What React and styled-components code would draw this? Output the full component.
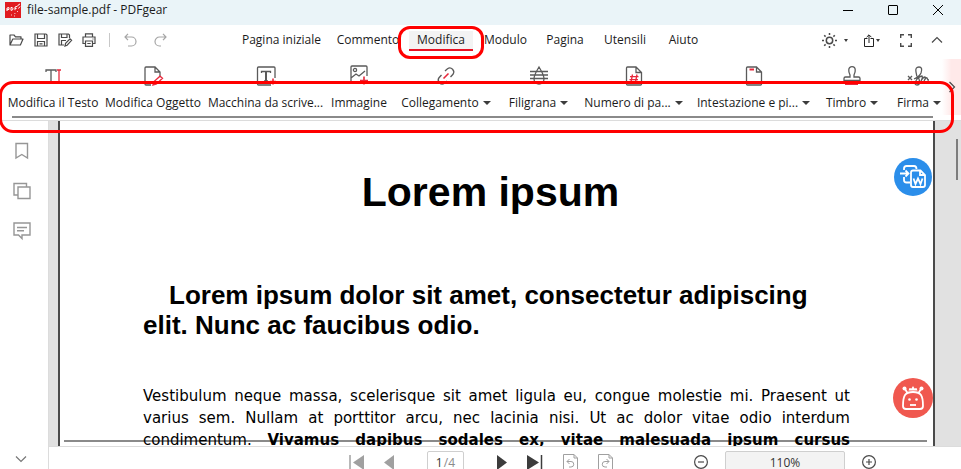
import styled, { createGlobalStyle } from "styled-components";

const GlobalStyle = createGlobalStyle`
  * {
    box-sizing: border-box;
  }
  body {
    margin: 0;
    overflow: hidden;
    font-family: "Open Sans", "Noto Sans", sans-serif;
    font-size: 12px;
    color: #1b1b1b;
  }
  button,
  input {
    font: inherit;
    color: inherit;
  }
  svg {
    display: block;
    overflow: visible;
    fill: none;
    stroke: currentColor;
  }
`;

const Window = styled.div`
  display: flex;
  flex-direction: column;
  height: 100vh;
  background: #fff;
`;

const TitleBar = styled.header`
  display: flex;
  align-items: center;
  justify-content: space-between;
  flex: 0 0 25px;
  padding: 0 18px 6px 5px;
  background: #eaf4f8;
`;

const AppTitle = styled.div`
  display: flex;
  align-items: center;
  gap: 6px;
  line-height: 16px;
`;

const Group = styled.div`
  display: flex;
  align-items: center;
  gap: ${(props) => props.$gap}px;
`;

const IconButton = styled.button`
  display: flex;
  align-items: center;
  justify-content: center;
  padding: 0;
  border: 0;
  background: none;
  color: ${(props) => props.$color || "#4a4a4a"};
  cursor: pointer;
`;

const MenuBar = styled.nav`
  display: flex;
  flex: 0 0 34px;
  padding: 0 19px 4px 9px;
`;

const QuickActions = styled(Group)`
  width: 225px;
`;

const Divider = styled.span`
  width: 1px;
  height: 14px;
  margin-left: 3px;
  background: #c8c8c8;
`;

const Tabs = styled.div`
  display: flex;
  align-items: center;
  flex: 1;
  padding-top: 2px;
`;

const TabSlot = styled.div`
  position: relative;
  display: flex;
  justify-content: center;
  width: ${(props) => props.$width}px;
`;

const Tab = styled.button`
  padding: 0 8px;
  border: 0;
  border-bottom: 2px solid ${(props) => (props.$active ? "#e81123" : "transparent")};
  background: ${(props) => (props.$active ? "#f3f3f3" : "none")};
  line-height: 18px;
  white-space: nowrap;
  cursor: pointer;
`;

const TabMark = styled.span`
  position: absolute;
  inset: -5px -9px -8px;
  border: 3px solid #f00;
  border-radius: 12px;
  pointer-events: none;
`;

const Ribbon = styled.section`
  position: relative;
  flex: none;
  padding: 7px 10px 2px 5px;
  border-bottom: 1px solid #dcdcdc;
`;

const Tools = styled.div`
  display: grid;
  grid-template-columns:
    minmax(0, 96fr) minmax(0, 104fr) minmax(0, 121fr) minmax(0, 66fr)
    minmax(0, 108fr) minmax(0, 77fr) minmax(0, 113fr) minmax(0, 127fr)
    minmax(0, 70fr) minmax(0, 64fr);
`;

const Tool = styled.button`
  display: flex;
  flex-direction: column;
  align-items: center;
  gap: 9px;
  padding: 0;
  border: 0;
  background: none;
  color: #5a5a5a;
  cursor: pointer;
`;

const ToolLabel = styled.span`
  display: flex;
  align-items: center;
  gap: 4px;
  color: #1b1b1b;
  line-height: 16px;
  white-space: nowrap;
`;

const Caret = styled.span`
  border: solid transparent;
  border-width: ${(props) => (props.$small ? "3px 2px 0" : "4px 4px 0")};
  border-top-color: #3c3c3c;
`;

const RibbonScroll = styled.div`
  height: 2px;
  margin: 5px 18px 0 7px;
  background: #8a8a8a;
`;

const RibbonMark = styled.div`
  position: absolute;
  inset: 22px 7px -13px -1px;
  z-index: 2;
  border: 3px solid #f00;
  border-radius: 14px;
  pointer-events: none;
`;

const RibbonNext = styled(IconButton)`
  position: absolute;
  top: 0;
  right: 0;
  width: 19px;
  height: 56px;
  background: linear-gradient(to right, #fff, #ffe9e9 50%);
`;

const Body = styled.div`
  display: flex;
  flex: 1;
  min-height: 0;
`;

const Sidebar = styled.aside`
  display: flex;
  flex-direction: column;
  align-items: center;
  gap: 22px;
  width: 49px;
  padding: 21px 4px 7px 0;
  border-right: 1px solid #dcdcdc;
`;

const SidebarToggle = styled(IconButton)`
  margin: auto 3px 0 0;
`;

const Main = styled.main`
  display: flex;
  flex: 1;
  flex-direction: column;
  min-width: 0;
`;

const Viewer = styled.div`
  position: relative;
  display: flex;
  flex: 1;
  min-height: 0;
  overflow: hidden;
  padding: 0 26px 0 9px;
  background: #e1e1e1;
`;

const Page = styled.article`
  flex: 1;
  padding: 47px 83px 0;
  border: solid #4a4a4a;
  border-width: 0 2px;
  background: #fff;
  color: #000;
`;

const Heading = styled.h1`
  margin: 0;
  padding-right: 12px;
  font: bold 41px/48px "Liberation Sans", Arial, sans-serif;
  text-align: center;
`;

const Subheading = styled.h2`
  margin: 64px 0 45px;
  font: bold 26px/30px "Liberation Sans", Arial, sans-serif;
  text-indent: 26px;
`;

const Paragraph = styled.p`
  margin: 0;
  font: 15px/22px "DejaVu Sans", sans-serif;
  text-align: justify;
  text-align-last: justify;
`;

const HorizontalScroll = styled.div`
  position: absolute;
  right: 34px;
  bottom: 4px;
  left: 15px;
  height: 2px;
  background: rgba(0, 0, 0, 0.46);
`;

const VerticalScroll = styled.div`
  position: absolute;
  top: 18px;
  right: 3px;
  width: 2px;
  height: 41px;
  background: #7d7d7d;
`;

const FloatingButton = styled(IconButton)`
  position: absolute;
  right: ${(props) => (props.$bottom ? 28 : 29)}px;
  top: ${(props) => props.$top};
  bottom: ${(props) => props.$bottom};
  width: ${(props) => props.$size}px;
  height: ${(props) => props.$size}px;
  border-radius: 50%;
  background: ${(props) => props.$fill};
  color: #fff;
`;

const Footer = styled.footer`
  flex: 0 0 23px;
  overflow: hidden;
  border-top: 1px solid #dcdcdc;
`;

const FooterRow = styled.div`
  display: flex;
  align-items: center;
  justify-content: flex-end;
  gap: 81px;
  height: 30px;
  padding-right: 85px;
`;

const PageJump = styled.label`
  display: flex;
  align-items: center;
  justify-content: center;
  width: 37px;
  height: 22px;
  margin: 2px 13px;
  border: 1px solid #cfcfcf;
  border-radius: 2px;
  color: #8a8a8a;
`;

const PageInput = styled.input`
  width: 8px;
  padding: 0;
  border: 0;
  outline: 0;
  color: #333;
`;

const Zoom = styled.button`
  width: 120px;
  height: 22px;
  padding: 0;
  border: 1px solid #cfcfcf;
  border-radius: 2px;
  background: #f3f3f3;
  color: #333;
`;

const RED = "#e8283c";

const LogoIcon = () => (
  <svg width="16" height="16" viewBox="0 0 16 16">
    <path d="M0 0h16v16H0z" fill="#e01b20" stroke="none" />
    <path d="M2 9V6l2-.4v1.8l-2 .4M6 8.4V5.4q2 0 2 1.4T6 8.4M10 8.2V5l2-.6M10 6.4h1.6M12.5 4.4q.5-2 2.5-2.4M13.5 6.5l1.5-2" stroke="#fff" />
    <path d="M6 13h.8M9 14h.8M9.5 11.5h.8M12 9.5h.8" stroke="#fff" />
  </svg>
);

const MinimizeIcon = () => (
  <svg width="10" height="10" viewBox="0 0 10 10">
    <path d="M0 5.5h10" />
  </svg>
);

const MaximizeIcon = () => (
  <svg width="10" height="10" viewBox="0 0 10 10">
    <rect x=".5" y=".5" width="9" height="9" rx=".5" />
  </svg>
);

const CloseIcon = () => (
  <svg width="10" height="10" viewBox="0 0 10 10">
    <path d="M0 0l10 10M10 0L0 10" />
  </svg>
);

const OpenIcon = () => (
  <svg width="15" height="14" viewBox="0 0 15 14" strokeWidth="1.2">
    <path d="M1 12V2h4l1.5 1.8H12V6M1 12L3.8 6H14l-2.6 6z" strokeLinejoin="round" />
  </svg>
);

const SaveIcon = () => (
  <svg width="14" height="14" viewBox="0 0 14 14" strokeWidth="1.2">
    <path d="M1 1h11l1 1v11H1zM3.5 1v4.5h7V1M3.5 13V8.5h7V13M5.5 10.8h3" />
  </svg>
);

const SaveAsIcon = () => (
  <svg width="14" height="14" viewBox="0 0 14 14" strokeWidth="1.2">
    <path d="M6 12H1V1h9.5l1 1v3M3.5 1v3.5H9V1M3.5 12V7.5H8" />
    <path d="M7 13l.6-2.6 4.4-4.6 1.6 1.5-4.5 4.9z" />
  </svg>
);

const PrintIcon = () => (
  <svg width="14" height="14" viewBox="0 0 14 14" strokeWidth="1.2">
    <path d="M3.5 4V.8h7V4M3.5 10.5H1V4h12v6.5h-2.5M3.5 8h7v5.3h-7zM5.3 10.5h3.4M10.5 6h1" />
  </svg>
);

const UndoIcon = () => (
  <svg width="13" height="14" viewBox="0 0 13 14" strokeWidth="1.2">
    <path d="M4 .8L1 4l3 3.2M1 4h6.5a4.4 4.4 0 010 9H4" />
  </svg>
);

const RedoIcon = () => (
  <svg width="13" height="14" viewBox="0 0 13 14" strokeWidth="1.2">
    <path d="M9 .8L12 4 9 7.2M12 4H5.5a4.4 4.4 0 000 9H7" />
  </svg>
);

const SunIcon = () => (
  <svg width="15" height="15" viewBox="0 0 15 15" strokeWidth="1.5">
    <circle cx="7.5" cy="7.5" r="3.2" />
    <path d="M7.5 0v2M7.5 13v2M0 7.5h2M13 7.5h2M2.2 2.2l1.4 1.4M11.4 11.4l1.4 1.4M2.2 12.8l1.4-1.4M11.4 3.6l1.4-1.4" />
  </svg>
);

const ShareIcon = () => (
  <svg width="11" height="13" viewBox="0 0 11 13">
    <path d="M3.5 4.5h-3v8h9v-8h-3M5 9V1M2.6 3.2L5 .8l2.4 2.4" />
  </svg>
);

const FullscreenIcon = () => (
  <svg width="12" height="13" viewBox="0 0 12 13" strokeWidth="1.4">
    <path d="M.7 4V.7H4M8 .7h3.3V4M11.3 9v3.3H8M4 12.3H.7V9" />
  </svg>
);

const ChevronIcon = ({ rotate = 0 }) => (
  <svg width="10" height="6" viewBox="0 0 10 6" strokeWidth="1.2">
    <path d="M0 5.5l5-5 5 5" transform={`rotate(${rotate} 5 3)`} />
  </svg>
);

const ToolIcon = ({ children }) => (
  <svg width="20" height="20" viewBox="0 0 20 20" strokeWidth="1.3">
    {children}
  </svg>
);

const textIcon = (
  <ToolIcon>
    <path d="M3 6V4h10v2M8 4v13" />
    <path d="M14 4h4M16 4v13M14 17h4" stroke={RED} />
  </ToolIcon>
);

const objectIcon = (
  <ToolIcon>
    <path d="M8 19H3Q2 19 2 18V2q0-1 1-1h9l5 5v4M12 1v5h5" />
    <path d="M10 19l1-3.5 6-5.3 2.5 2-6 5.8zM12 15l2.5 2" stroke={RED} />
  </ToolIcon>
);

const typewriterIcon = (
  <ToolIcon>
    <path d="M15 19H2.5q-1 0-1-1V2q0-1 1-1H18q1 0 1 1v10M5.5 7V5.5h9V7M8 15h4" />
    <path d="M10 5.5V15" strokeWidth="2" />
    <path d="M14 15.5h6M17 12.5v6" stroke={RED} strokeWidth="1.6" />
  </ToolIcon>
);

const imageIcon = (
  <ToolIcon>
    <path d="M10 17H3q-1 0-1-1V1q0-1 1-1h14q1 0 1 1v9M2 12l5-4 3 2 6-5" />
    <circle cx="6" cy="4" r="1.6" />
    <path d="M11 14.5h8M15 10.5v8" stroke={RED} strokeWidth="1.6" />
  </ToolIcon>
);

const linkIcon = (
  <ToolIcon>
    <path d="M9 5l2.5-2.3a4 4 0 015.500 5.600L14.500 11M11 15l-2.500 2.300a4 4 0 01-5.500-5.600L5.500 9" />
    <path d="M7.5 12.5l5-5" stroke={RED} strokeWidth="1.6" />
  </ToolIcon>
);

const watermarkIcon = (
  <ToolIcon>
    <path d="M10 1Q5 9 5 13a5 5 0 0010 0Q15 9 10 1zM1 5.5h18M1 9h18M1 12.5h18" />
  </ToolIcon>
);

const numberIcon = (
  <ToolIcon>
    <path d="M12 1H3.5q-1 0-1 1v16q0 1 1 1h13q1 0 1-1V6.5zv5.5h5.5" />
    <path d="M8.5 8.5L7 16M13 8.5L11.5 16M6 10.7h8.5M5.5 13.7H14" stroke={RED} />
  </ToolIcon>
);

const headerIcon = (
  <ToolIcon>
    <path d="M12.5 1h-9q-1 0-1 1v16q0 1 1 1h13q1 0 1-1V6zv5h5" />
    <path d="M5.5 3.5H10" stroke={RED} strokeWidth="2" />
  </ToolIcon>
);

const stampIcon = (
  <ToolIcon>
    <path d="M2 14.5v-2Q2 11 3.5 11H8V9Q6.500 6 6.800 3.800a3.200 3.200 0 016.400 0Q13.500 6 12 9v2h4.500q1.500 0 1.500 1.500v2z" />
    <path d="M3 18h13" stroke={RED} strokeWidth="2" />
  </ToolIcon>
);

const signatureIcon = (
  <ToolIcon>
    <path d="M-1 10l4 4M3 10l-4 4" />
    <path d="M5 13q5-2 7-6 2-6-2-6T7 6q0 4 3 7 2 6-2 6t0-6q3-3 5-3 1 1-1 5 2-4 4-4 1 1-1 4 2-4 3-3l1 2h1" />
  </ToolIcon>
);

const BookmarkIcon = () => (
  <svg width="18" height="18" viewBox="0 0 18 18" strokeWidth="1.4">
    <path d="M3 1.5h11.5V16L8.8 12.5 3 16z" />
  </svg>
);

const PagesIcon = () => (
  <svg width="18" height="18" viewBox="0 0 18 18" strokeWidth="1.4">
    <path d="M5 13H1V1.5h12.5V5M5 5h12v11.5H5z" />
  </svg>
);

const CommentIcon = () => (
  <svg width="18" height="18" viewBox="0 0 18 18" strokeWidth="1.4">
    <path d="M1 1h16v12H9v3.5L5.5 13H1zM4 5.5h10M4 8.7h7" />
  </svg>
);

const WordIcon = () => (
  <svg width="26" height="24" viewBox="0 0 26 24" strokeWidth="1.8">
    <path d="M4 5V3.500q0-2.500 2.500-2.500H14q2.500 0 2.500 3M4 12v3q0 2.500 2.500 2.500H10M0 8.500h8M5.500 5.500l3 3-3 3" />
    <path d="M13 5.500h7.500L25 10v10q0 2-2 2H13q-2 0-2-2V7.500q0-2 2-2zM20 5.500V10h5" />
    <path d="M13.500 13.500l2 5.500L18 13.500l2.500 5.500 2-5.500" />
  </svg>
);

const RobotIcon = () => (
  <svg width="22" height="24" viewBox="0 0 22 24" strokeWidth="1.8">
    <path d="M4 23q-3 0-3-3 0-8 2-11 2-3 8-3t8 3q2 3 2 11 0 3-3 3zM5.5 7L3 3M16.500 7L19 3" />
    <g fill="currentColor" stroke="none">
      <circle cx="2.500" cy="2.500" r="2" />
      <circle cx="19.500" cy="2.500" r="2" />
      <path d="M6.500 4.500l1-2.500 2 .5L11 0l1.500 2.500 2-.5 1 2.500z" />
      <circle cx="7.500" cy="13.500" r="1.300" />
      <circle cx="14.500" cy="13.500" r="1.300" />
    </g>
    <path d="M8 19h6" />
  </svg>
);

const FirstIcon = () => (
  <svg width="15" height="15" viewBox="0 0 15 15">
    <path d="M1 0v15" strokeWidth="1.5" />
    <path d="M15 0v15L4 7.5z" fill="currentColor" stroke="none" />
  </svg>
);

const PreviousIcon = () => (
  <svg width="10" height="15" viewBox="0 0 10 15">
    <path d="M10 0v15L0 7.5z" fill="currentColor" stroke="none" />
  </svg>
);

const NextIcon = () => (
  <svg width="10" height="15" viewBox="0 0 10 15">
    <path d="M0 0v15l10-7.5z" fill="currentColor" stroke="none" />
  </svg>
);

const LastIcon = () => (
  <svg width="16" height="15" viewBox="0 0 16 15">
    <path d="M14.5 0v15" strokeWidth="1.5" />
    <path d="M0 0v15l12-7.5z" fill="currentColor" stroke="none" />
  </svg>
);

const RotateIcon = ({ flip }) => (
  <svg width="15" height="17" viewBox="0 0 15 17">
    <path d="M11 .5H.5v16h14V4zV4h3.5" />
    <path
      d="M6.5 5L4 7.5 6.5 10M4 7.5h4a2.700 2.700 0 010 5.500H6"
      transform={flip ? "translate(15 0) scale(-1 1)" : undefined}
    />
  </svg>
);

const ZoomIcon = ({ plus }) => (
  <svg width="14" height="14" viewBox="0 0 14 14" strokeWidth="1.2">
    <circle cx="7" cy="7" r="6.4" />
    <path d={plus ? "M4 7h6M7 4v6" : "M4 7h6"} />
  </svg>
);

const tabs = [
  { label: "Pagina iniziale", width: 95 },
  { label: "Commento", width: 78 },
  { label: "Modifica", width: 68, active: true },
  { label: "Modulo", width: 61 },
  { label: "Pagina", width: 58 },
  { label: "Utensili", width: 62 },
  { label: "Aiuto", width: 55 },
];

const tools = [
  { label: "Modifica il Testo", icon: textIcon },
  { label: "Modifica Oggetto", icon: objectIcon },
  { label: "Macchina da scrive...", icon: typewriterIcon },
  { label: "Immagine", icon: imageIcon },
  { label: "Collegamento", icon: linkIcon, menu: true },
  { label: "Filigrana", icon: watermarkIcon, menu: true },
  { label: "Numero di pa...", icon: numberIcon, menu: true },
  { label: "Intestazione e pi...", icon: headerIcon, menu: true },
  { label: "Timbro", icon: stampIcon, menu: true },
  { label: "Firma", icon: signatureIcon, menu: true },
];

export default function App() {
  return (
    <Window>
      <GlobalStyle />
      <TitleBar>
        <AppTitle>
          <LogoIcon />
          file-sample.pdf - PDFgear
        </AppTitle>
        <Group $gap={35}>
          <IconButton aria-label="Riduci a icona" $color="#000">
            <MinimizeIcon />
          </IconButton>
          <IconButton aria-label="Ingrandisci" $color="#000">
            <MaximizeIcon />
          </IconButton>
          <IconButton aria-label="Chiudi" $color="#000">
            <CloseIcon />
          </IconButton>
        </Group>
      </TitleBar>
      <MenuBar>
        <QuickActions $gap={10}>
          <IconButton aria-label="Apri">
            <OpenIcon />
          </IconButton>
          <IconButton aria-label="Salva">
            <SaveIcon />
          </IconButton>
          <IconButton aria-label="Salva con nome">
            <SaveAsIcon />
          </IconButton>
          <IconButton aria-label="Stampa">
            <PrintIcon />
          </IconButton>
          <Group $gap={14}>
            <Divider />
            <Group $gap={17}>
              <IconButton aria-label="Annulla" $color="#a5a5a5">
                <UndoIcon />
              </IconButton>
              <IconButton aria-label="Ripeti" $color="#a5a5a5">
                <RedoIcon />
              </IconButton>
            </Group>
          </Group>
        </QuickActions>
        <Tabs>
          {tabs.map((tab) => (
            <TabSlot key={tab.label} $width={tab.width}>
              <Tab $active={tab.active}>{tab.label}</Tab>
              {tab.active && <TabMark />}
            </TabSlot>
          ))}
        </Tabs>
        <Group $gap={20}>
          <Group $gap={16}>
            <Group $gap={7}>
              <IconButton aria-label="Tema">
                <SunIcon />
              </IconButton>
              <Caret $small />
            </Group>
            <Group $gap={1}>
              <IconButton aria-label="Condividi" $color="#222">
                <ShareIcon />
              </IconButton>
              <Caret $small />
            </Group>
          </Group>
          <IconButton aria-label="Schermo intero">
            <FullscreenIcon />
          </IconButton>
          <IconButton aria-label="Comprimi">
            <ChevronIcon />
          </IconButton>
        </Group>
      </MenuBar>
      <Ribbon>
        <Tools>
          {tools.map((tool) => (
            <Tool key={tool.label}>
              {tool.icon}
              <ToolLabel>
                {tool.label}
                {tool.menu && <Caret />}
              </ToolLabel>
            </Tool>
          ))}
        </Tools>
        <RibbonScroll />
        <RibbonNext aria-label="Altri strumenti">
          <ChevronIcon rotate={90} />
        </RibbonNext>
        <RibbonMark />
      </Ribbon>
      <Body>
        <Sidebar>
          <IconButton aria-label="Segnalibri" $color="#969696">
            <BookmarkIcon />
          </IconButton>
          <IconButton aria-label="Miniature" $color="#969696">
            <PagesIcon />
          </IconButton>
          <IconButton aria-label="Commenti" $color="#969696">
            <CommentIcon />
          </IconButton>
          <SidebarToggle aria-label="Espandi" $color="#777">
            <ChevronIcon rotate={180} />
          </SidebarToggle>
        </Sidebar>
        <Main>
          <Viewer>
            <Page>
              <Heading>Lorem ipsum</Heading>
              <Subheading>
                Lorem ipsum dolor sit amet, consectetur adipiscing
                <br />
                elit. Nunc ac faucibus odio.
              </Subheading>
              <Paragraph>
                Vestibulum neque massa, scelerisque sit amet ligula eu, congue
                molestie mi. Praesent ut varius sem. Nullam at porttitor arcu,
                nec lacinia nisi. Ut ac dolor vitae odio interdum condimentum.{" "}
                <strong>
                  Vivamus dapibus sodales ex, vitae malesuada ipsum cursus
                </strong>
              </Paragraph>
            </Page>
            <HorizontalScroll />
            <VerticalScroll />
            <FloatingButton
              aria-label="Converti in Word"
              $size={38}
              $top="37px"
              $fill="#2b8eea"
            >
              <WordIcon />
            </FloatingButton>
            <FloatingButton
              aria-label="Assistente"
              $size={40}
              $bottom="28px"
              $fill="#f0584f"
            >
              <RobotIcon />
            </FloatingButton>
          </Viewer>
          <Footer>
            <FooterRow>
              <Group $gap={20}>
                <IconButton aria-label="Prima pagina" $color="#a0a0a0">
                  <FirstIcon />
                </IconButton>
                <IconButton aria-label="Pagina precedente" $color="#a0a0a0">
                  <PreviousIcon />
                </IconButton>
                <PageJump>
                  <PageInput aria-label="Pagina" defaultValue="1" />
                  /4
                </PageJump>
                <IconButton aria-label="Pagina successiva" $color="#3c3c3c">
                  <NextIcon />
                </IconButton>
                <IconButton aria-label="Ultima pagina" $color="#3c3c3c">
                  <LastIcon />
                </IconButton>
                <IconButton aria-label="Ruota a sinistra" $color="#a0a0a0">
                  <RotateIcon />
                </IconButton>
                <IconButton aria-label="Ruota a destra" $color="#a0a0a0">
                  <RotateIcon flip />
                </IconButton>
              </Group>
              <Group $gap={17}>
                <IconButton aria-label="Riduci zoom">
                  <ZoomIcon />
                </IconButton>
                <Zoom>110%</Zoom>
                <IconButton aria-label="Aumenta zoom">
                  <ZoomIcon plus />
                </IconButton>
              </Group>
            </FooterRow>
          </Footer>
        </Main>
      </Body>
    </Window>
  );
}
